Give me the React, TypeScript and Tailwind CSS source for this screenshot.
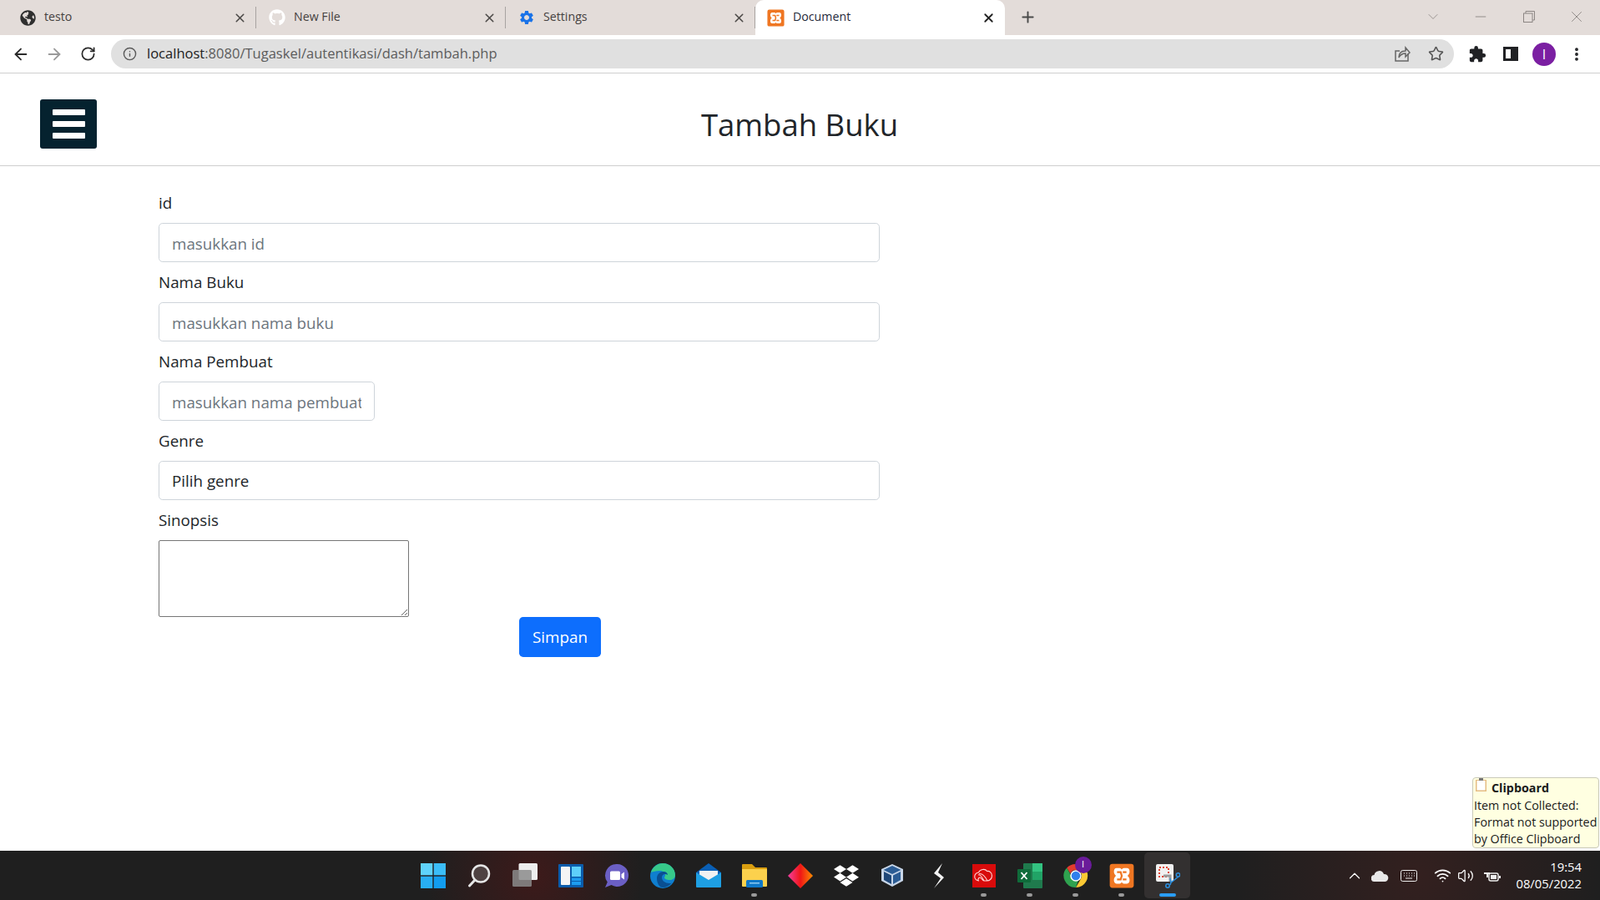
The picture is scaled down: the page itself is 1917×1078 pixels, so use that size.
import React from 'react';
import { ArrowLeft, ArrowRight, RotateCw, Info, Star, X, Plus, ChevronDown, ChevronUp, Minus, EllipsisVertical, Wifi, Volume2 } from 'lucide-react';
import { FaGlobeAmericas, FaGithub, FaDropbox } from 'react-icons/fa';
import { MdSettings, MdExtension } from 'react-icons/md';

const XamppIcon = ({ size = 20 }: { size?: number }) => (
  <svg width={size} height={size} viewBox="0 0 24 24">
    <rect x="0.5" y="0.5" width="23" height="23" rx="2.5" fill="#ef7622" />
    <path
      d="M7 4.500h3c1 0 1.500.7 2 1.500.5-.8 1-1.500 2-1.500h3c1.800 0 2.500 1.600 2.500 3.500 0 1.700-.8 3-2 4 1.200 1 2 2.300 2 4 0 1.900-.7 3.500-2.500 3.500h-3c-1 0-1.500-.7-2-1.500-.5.8-1 1.500-2 1.500H7c-1.800 0-2.500-1.600-2.500-3.500 0-1.700.8-3 2-4-1.200-1-2-2.300-2-4 0-1.900.7-3.500 2.500-3.500Z"
      fill="#fff"
    />
    <path d="M7.500 8.500H11l1 3.500-1 3.500H7.500M16.500 8.500H13M16.500 15.500H13" stroke="#ef7622" strokeWidth="1.800" fill="none" />
  </svg>
);

const ChromeIcon = () => (
  <svg width="30" height="30" viewBox="0 0 30 30">
    <path d="M15 1a14 14 0 0 1 12.200 7H15a7 7 0 0 0-6.500 4.400L4.200 5.500A14 14 0 0 1 15 1Z" fill="#e33b2e" />
    <path d="M27.200 8A14 14 0 0 1 15 29l6-10.500A7 7 0 0 0 20.800 11Z" fill="#fcc934" />
    <path d="M4.200 5.500 9.500 15a7 7 0 0 0 8.500 5.500L15 29A14 14 0 0 1 4.200 5.500Z" fill="#2fa24f" />
    <circle cx="15" cy="15" r="6" fill="#2f80ed" stroke="#fff" strokeWidth="1.500" />
  </svg>
);

const tabs = [
  { title: 'testo', icon: <FaGlobeAmericas size={19} className="text-[#2f2f2f]" /> },
  { title: 'New File', icon: <FaGithub size={20} className="text-white" /> },
  { title: 'Settings', icon: <MdSettings size={22} className="text-[#1a73e8]" /> },
];

const fields = [
  { label: 'id', placeholder: 'masukkan id', width: 'w-[864px]' },
  { label: 'Nama Buku', placeholder: 'masukkan nama buku', width: 'w-[864px]' },
  { label: 'Nama Pembuat', placeholder: 'masukkan nama pembuat', width: 'w-[259px]' },
];

const taskbarIcons: { key: string; dot?: boolean; active?: boolean; node: React.ReactNode }[] = [
  {
    key: 'start',
    node: (
      <svg width="30" height="30" viewBox="0 0 30 30">
        <rect width="14.300" height="14.300" fill="#5fd3fb" />
        <rect x="15.700" width="14.300" height="14.300" fill="#3bbdf7" />
        <rect y="15.700" width="14.300" height="14.300" fill="#28aef2" />
        <rect x="15.700" y="15.700" width="14.300" height="14.300" fill="#129cee" />
      </svg>
    ),
  },
  {
    key: 'search',
    node: (
      <svg width="30" height="30" viewBox="0 0 30 30" fill="none">
        <circle cx="17" cy="12.500" r="10" fill="#4f4242" stroke="#e6e6e6" strokeWidth="2.500" />
        <path d="M10 20 3.500 27" stroke="#e6e6e6" strokeWidth="3" strokeLinecap="round" />
      </svg>
    ),
  },
  {
    key: 'taskview',
    node: (
      <svg width="30" height="30" viewBox="0 0 30 30">
        <rect x="7.500" width="22.500" height="20" rx="1.500" fill="#ededed" />
        <rect y="8" width="23" height="20" rx="1.500" fill="#8b8b8b" fillOpacity="0.850" />
      </svg>
    ),
  },
  {
    key: 'widgets',
    node: (
      <svg width="30" height="30" viewBox="0 0 30 30">
        <rect width="30" height="28" y="1" rx="1" fill="#0b5cab" />
        <rect x="3" y="4" width="11" height="22" rx="1" fill="#f4f4f4" />
        <rect x="16" y="4" width="11" height="12" fill="#5ed0fb" />
        <rect x="16" y="17.500" width="11" height="3.500" fill="#1d9cf0" />
        <rect x="16" y="22" width="11" height="4" fill="#1d9cf0" />
      </svg>
    ),
  },
  {
    key: 'teams',
    node: (
      <svg width="30" height="30" viewBox="0 0 30 30">
        <path d="M15.500 1a13.500 13.500 0 1 1-7 25L1 29l2.800-6.500A13.500 13.500 0 0 1 15.500 1Z" fill="#6b5fc4" />
        <rect x="7" y="9.500" width="12" height="10.500" rx="1.500" fill="#fff" />
        <path d="m20.500 13 3.500-2.500v9L20.500 17Z" fill="#fff" />
      </svg>
    ),
  },
  {
    key: 'edge',
    node: (
      <svg width="30" height="30" viewBox="0 0 30 30">
        <circle cx="15" cy="15" r="15" fill="#0f7fcf" />
        <path d="M1 11C3 4 9 0 15 0c9 0 15 7 15 14 0 4-3 6-7 6-3 0-6-1-6-3 0-1 1-1 1-3 0-3-3-5-7-5-4 0-8 1-10 2Z" fill="#37c98a" />
        <path d="M8 18c0-5 4-8 8-8 3 0 5 2 5 4-3-2-7-1-7 3 0 4 4 7 9 7 1 0 2 0 3-1-3 4-7 6-11 6-4 0-7-5-7-11Z" fill="#0a4f92" />
      </svg>
    ),
  },
  {
    key: 'mail',
    node: (
      <svg width="30" height="30" viewBox="0 0 30 30">
        <path d="M0 11 15 0l15 11v3H0Z" fill="#0a5fb4" />
        <path d="M4 9h22v6l-11 6-11-6Z" fill="#f2f2f2" />
        <path d="M0 11v17a1 1 0 0 0 1 1h28a1 1 0 0 0 1-1V11L15 20Z" fill="#1e9fe3" />
      </svg>
    ),
  },
  {
    key: 'files',
    dot: true,
    node: (
      <svg width="30" height="30" viewBox="0 0 30 30">
        <path d="M0 2a1 1 0 0 1 1-1h11l4 4h13a1 1 0 0 1 1 1v4H0Z" fill="#d99e10" />
        <path d="M0 7h30v20a1 1 0 0 1-1 1H1a1 1 0 0 1-1-1Z" fill="#fcd14d" />
        <rect x="5" y="20" width="20" height="9" rx="1.500" fill="#0f78c9" />
        <rect x="9" y="23" width="12" height="1.500" fill="#8cc9f2" />
      </svg>
    ),
  },
  {
    key: 'anydesk',
    node: (
      <svg width="30" height="30" viewBox="0 0 30 30">
        <defs>
          <linearGradient id="dia" x1="0" x2="1">
            <stop offset="0" stopColor="#f43f9f" />
            <stop offset="0.500" stopColor="#f01616" />
            <stop offset="1" stopColor="#fb8c00" />
          </linearGradient>
        </defs>
        <path d="M15 0 30 15 15 30 0 15Z" fill="url(#dia)" />
      </svg>
    ),
  },
  { key: 'dropbox', node: <FaDropbox size={30} className="text-white" /> },
  {
    key: 'vbox',
    node: (
      <svg width="30" height="30" viewBox="0 0 30 30">
        <path d="M15 1 28 7v14l-13 7-13-7V7Z" fill="#c8d6e8" />
        <path d="M15 3 25.500 8 15 13 4.500 8Z" fill="#2b5c94" />
        <path d="M5 10l9 4.500V25l-9-5Z" fill="#1f4778" />
        <path d="M25 10l-9 4.500V25l9-5Z" fill="#2b5c94" />
      </svg>
    ),
  },
  {
    key: 'stream',
    node: (
      <svg width="30" height="30" viewBox="0 0 30 30">
        <path d="M20 0 10 12l8 6-8 12 12-13-7-6Z" fill="#f4f4f4" />
      </svg>
    ),
  },
  {
    key: 'adobe',
    dot: true,
    node: (
      <svg width="28" height="28" viewBox="0 0 28 28">
        <rect width="28" height="28" fill="#d80b0b" />
        <path d="M8 20a5 5 0 0 1-.5-10c1.500-4 8-5 10-1.500 3-.5 6 1.500 6 5.500a6 6 0 0 1-6 6H14c-2 0-3-4-5-4s-3 4-1 4ZM14 20c-3-6-5-8-7-7M18 20c-3-6-6-9-10-8.500" fill="none" stroke="#ffd6d6" strokeWidth="1.100" />
      </svg>
    ),
  },
  {
    key: 'excel',
    dot: true,
    node: (
      <svg width="30" height="30" viewBox="0 0 30 30">
        <rect x="7" width="23" height="30" rx="1" fill="#1f7a4d" />
        <rect x="18" width="12" height="10" fill="#33c481" />
        <rect x="18" y="10" width="12" height="10" fill="#21a366" />
        <rect y="7" width="16" height="16" rx="1" fill="#0f6b3a" />
        <path d="m4.500 11 7 8M11.500 11l-7 8" stroke="#fff" strokeWidth="1.800" />
      </svg>
    ),
  },
  {
    key: 'chrome',
    dot: true,
    node: (
      <span className="relative flex">
        <ChromeIcon />
        <span className="absolute left-[14px] top-[-8px] flex h-[20px] w-[20px] items-center justify-center rounded-full bg-[#6a1b9a] text-[11px] text-white">I</span>
      </span>
    ),
  },
  { key: 'xampp', dot: true, node: <XamppIcon size={30} /> },
  {
    key: 'snip',
    active: true,
    node: (
      <svg width="30" height="30" viewBox="0 0 30 30" fill="none">
        <rect x="1" y="1" width="21" height="21" rx="2" fill="#f1f1f1" />
        <rect x="5" y="5" width="11" height="11" stroke="#e0452f" strokeWidth="2" strokeDasharray="2 2" />
        <path d="M10 15h8v7" stroke="#9b9b9b" strokeWidth="3" />
        <path d="m18 18 1 5 9-7M18 26l1-3" stroke="#2a8fe0" strokeWidth="1.500" />
        <circle cx="15" cy="27" r="2.200" stroke="#2a8fe0" strokeWidth="1.500" />
        <circle cx="27.500" cy="14" r="2.200" stroke="#2a8fe0" strokeWidth="1.500" />
      </svg>
    ),
  },
];

export default function App() {
  return (
    <div className="flex h-[1078px] w-[1917px] flex-col overflow-hidden bg-white font-['Open_Sans',sans-serif] text-[#212529]">
      {/* Tab strip */}
      <div className="flex h-[42px] shrink-0 items-center bg-[#e3dcd9] pl-[8px] text-[14.200px]">
        {tabs.map((tab) => (
          <div key={tab.title} className="flex h-full w-[299px] items-center border-r border-r-[#a8a3a1] [border-image:linear-gradient(transparent_20%,#a8a3a1_20%,#a8a3a1_80%,transparent_80%)_1]">
            <span className="ml-[15px] flex w-[20px] items-center justify-center">{tab.icon}</span>
            <span className="mb-[2px] ml-[10px] text-[#45413f]">{tab.title}</span>
            <X size={17} strokeWidth={2.200} className="ml-auto mr-[10px] text-[#4c4947]" />
          </div>
        ))}
        <div className="flex h-full w-[299px] items-center self-end rounded-t-[10px] bg-white">
          <span className="ml-[14px] flex"><XamppIcon size={21} /></span>
          <span className="mb-[2px] ml-[10px] text-[#1f2a3a]">Document</span>
          <X size={17} strokeWidth={2.500} className="ml-auto mr-[11px] text-[#222]" />
        </div>
        <Plus size={21} strokeWidth={2.200} className="mb-[1px] ml-[17px] text-[#4a4a4a]" />
        <div className="mb-[3px] ml-auto flex items-center text-[#8b8583]">
          <ChevronDown size={20} strokeWidth={1} />
          <Minus size={20} strokeWidth={1.100} className="ml-[37px]" />
          <svg width="14" height="14" viewBox="0 0 14 14" fill="none" stroke="currentColor" className="ml-[41px]">
            <rect x="0.500" y="3" width="10.500" height="10.500" />
            <path d="M3 3V.5h10.500V11H11" />
          </svg>
          <X size={22} strokeWidth={1} className="ml-[39px] mr-[17px]" />
        </div>
      </div>

      {/* Toolbar */}
      <div className="flex h-[46px] shrink-0 items-center border-b border-b-[#cfcfcf] pl-[14px]">
        <ArrowLeft size={22} strokeWidth={2} className="text-[#2b2b2b]" />
        <ArrowRight size={22} strokeWidth={2} className="ml-[18px] text-[#9a9a9a]" />
        <RotateCw size={19} strokeWidth={2.200} className="ml-[20px] text-[#2b2b2b]" />
        <div className="ml-[18px] flex h-[35px] w-[1609px] items-center rounded-full bg-[#e0e0e0] pl-[14px] pr-[12px]">
          <Info size={17} className="text-[#5a5a5a]" />
          <span className="ml-[12px] text-[16.550px]">
            <span className="text-[#202020]">localhost</span>
            <span className="text-[#5c5c5c]">:8080/Tugaskel/autentikasi/dash/tambah.php</span>
          </span>
          <svg width="20" height="20" viewBox="0 0 20 20" fill="none" stroke="#666" strokeWidth="1.500" className="ml-auto">
            <path d="M17 9v9H2V6h5" />
            <path d="M6 14c0-5 3-8 8-8V2l5 6-5 5V9c-4 0-6 1-8 5Z" />
          </svg>
          <Star size={19} strokeWidth={2} className="ml-[21px] text-[#555]" />
        </div>
        <MdExtension size={22} className="ml-[17px] text-[#202124]" />
        <span className="ml-[20px] flex h-[17px] w-[18px] justify-start border-[3px] border-[#202124] bg-white">
          <span className="ml-auto h-full w-[6px] bg-[#202124]" />
        </span>
        <span className="ml-[17px] flex h-[28px] w-[28px] items-center justify-center rounded-full bg-[#7b1fa2] text-[16px] text-white">I</span>
        <EllipsisVertical size={20} strokeWidth={2.600} className="ml-[15px] text-[#202124]" />
      </div>

      {/* Page header */}
      <div className="relative flex h-[111px] shrink-0 items-center justify-center border-b border-b-[#cfcfcf] pr-[1px] pt-[12px]">
        <button className="absolute left-[48px] top-[31px] flex h-[59px] w-[68px] flex-col items-center justify-center gap-[7px] rounded-[3px] bg-[#05222f]">
          <span className="h-[7px] w-[39px] rounded-[1px] bg-white" />
          <span className="h-[7px] w-[39px] rounded-[1px] bg-white" />
          <span className="h-[7px] w-[39px] rounded-[1px] bg-white" />
        </button>
        <h1 className="text-[36.500px] font-normal leading-none">Tambah Buku</h1>
      </div>

      {/* Form */}
      <div className="relative flex-1 pl-[190px] pt-[30px] text-[18.800px]">
        {fields.map((field) => (
          <div key={field.label} className="mb-[10px]">
            <label className="mb-[9px] block h-[29px] leading-[29px]">{field.label}</label>
            <input
              placeholder={field.placeholder}
              className={`block h-[47px] ${field.width} rounded-[4.800px] border border-[#ced4da] bg-white px-[15px] pt-[2px] placeholder:text-[#6c757d]`}
            />
          </div>
        ))}
        <div className="mb-[10px]">
          <label className="mb-[9px] block h-[29px] leading-[29px]">Genre</label>
          <select className="block h-[47px] w-[864px] appearance-none rounded-[4.800px] border border-[#ced4da] bg-white px-[15px] pt-[2px]">
            <option>Pilih genre</option>
          </select>
        </div>
        <label className="mb-[9px] block h-[29px] leading-[29px]">Sinopsis</label>
        <textarea className="block h-[92px] w-[300px] rounded-[2px] border border-[#767676]" />
        <button className="ml-[432px] block h-[48px] w-[98px] rounded-[4.800px] bg-[#0d6efd] text-white">Simpan</button>

        {/* Office clipboard toast */}
        <div className="absolute bottom-[3px] right-[1px] h-[85px] w-[152px] rounded-[4px] border border-[#c9c9b8] bg-[#ffffe1] pl-[1px] text-[14.300px] leading-[20px] text-[#1a1a1a]">
          <div className="flex h-[23px] items-center font-bold">
            <svg width="13" height="16" viewBox="0 0 13 16" className="ml-[2px] mr-[6px] self-start">
              <rect y="2" width="13" height="14" fill="#e5bd82" />
              <rect x="1.500" y="3" width="10" height="11.500" fill="#fff" />
              <rect x="4" width="5" height="3" fill="#777" />
            </svg>
            Clipboard
          </div>
          <div className="whitespace-nowrap">Item not Collected:</div>
          <div className="whitespace-nowrap">Format not supported</div>
          <div className="whitespace-nowrap">by Office Clipboard</div>
        </div>
      </div>

      {/* Windows taskbar */}
      <div className="flex h-[59px] shrink-0 items-center bg-[#1f1f1f] bg-[radial-gradient(circle_at_640px_30px,#3d1a1a_0,transparent_130px),radial-gradient(circle_at_1700px_30px,#33201f_0,transparent_220px)] pl-[491px] text-[14.800px] text-white">
        {taskbarIcons.map((icon) => (
          <div
            key={icon.key}
            className={`relative flex h-[55px] w-[55px] items-center justify-center rounded-[5px] ${icon.active ? 'bg-[#333030]' : ''}`}
          >
            {icon.node}
            {icon.dot && <span className="absolute bottom-[2px] left-[24px] h-[4px] w-[7px] rounded-full bg-[#9a9a9a]" />}
            {icon.active && <span className="absolute bottom-[2px] left-[18px] h-[4px] w-[20px] rounded-full bg-[#2a9df4]" />}
          </div>
        ))}
        <div className="ml-auto flex items-center pr-[22px]">
          <ChevronUp size={22} strokeWidth={1.300} />
          <svg width="21" height="14" viewBox="0 0 21 14" className="ml-[9px]" fill="#e8e8e8">
            <path d="M4 14a4 4 0 0 1-.5-8A6 6 0 0 1 15 5a4.500 4.500 0 0 1 1.500 9Z" />
          </svg>
          <svg width="20" height="14" viewBox="0 0 20 14" fill="none" stroke="#eee" className="ml-[14px]">
            <rect x="0.500" y="0.500" width="19" height="13" rx="2" />
            <path d="M4 4h1M7 4h1M10 4h1M13 4h1M16 4h1M4 7h1M7 7h1M10 7h1M13 7h1M16 7h1M6 10h8" />
          </svg>
          <Wifi size={21} strokeWidth={2} className="ml-[20px]" />
          <Volume2 size={20} strokeWidth={1.500} className="ml-[7px]" />
          <svg width="20" height="16" viewBox="0 0 20 16" className="ml-[12px]" fill="#eee">
            <path d="M2 1v3M5 1v3M0 4h7v2H0ZM3 6h2v4H3Z" />
            <rect x="6" y="5" width="11" height="9" rx="2" fill="none" stroke="#eee" strokeWidth="1.500" />
            <rect x="8" y="7" width="7" height="5" />
            <rect x="18" y="8" width="2" height="3" />
          </svg>
          <div className="mb-[2px] ml-[18px] flex flex-col items-end leading-[20px]">
            <span>19:54</span>
            <span>08/05/2022</span>
          </div>
        </div>
      </div>
    </div>
  );
}
